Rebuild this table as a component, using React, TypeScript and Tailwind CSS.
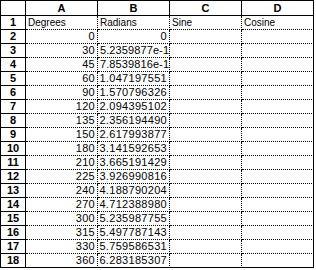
const COLUMNS = ["A", "B", "C", "D"];

const DATA: [string, string][] = [
  ["0", "0"],
  ["30", "5.2359877e-1"],
  ["45", "7.8539816e-1"],
  ["60", "1.047197551"],
  ["90", "1.570796326"],
  ["120", "2.094395102"],
  ["135", "2.356194490"],
  ["150", "2.617993877"],
  ["180", "3.141592653"],
  ["210", "3.665191429"],
  ["225", "3.926990816"],
  ["240", "4.188790204"],
  ["270", "4.712388980"],
  ["300", "5.235987755"],
  ["315", "5.497787143"],
  ["330", "5.759586531"],
  ["360", "6.283185307"],
];

const ROWS = [
  { cells: ["Degrees", "Radians", "Sine", "Cosine"], numeric: false },
  ...DATA.map(([a, b]) => ({ cells: [a, b, "", ""], numeric: true })),
];

const App = () => {
  return (
    <div className="h-[270px] w-[316px] bg-white">
      <div className="grid w-[314px] grid-cols-[25px_repeat(4,72px)] border-l border-t border-black font-['Geneva','Liberation_Sans',sans-serif] text-black">
        {/* Header row */}
        <div className="h-[15px] border-b border-r border-black" />
        {COLUMNS.map((col) => (
          <div
            key={col}
            className="flex h-[15px] items-center justify-center border-b border-r border-black text-[11px] font-bold leading-none"
          >
            {col}
          </div>
        ))}

        {/* Data rows */}
        {ROWS.map((row, i) => {
          const last = i === ROWS.length - 1;
          return [
            <div
              key={`h${i}`}
              className="flex h-[14px] items-center justify-center border-b border-r border-black text-[11px] font-bold leading-none"
            >
              {i + 1}
            </div>,
            ...row.cells.map((val, j) => {
              const isSci = val.includes("e-");
              const bottom = last ? "[border-bottom-style:solid]" : "[border-bottom-style:dotted]";
              const right = j === 3 ? "[border-right-style:solid]" : "[border-right-style:dotted]";
              const align =
                row.numeric && !isSci ? "justify-end pr-[2px]" : "justify-start pl-[2px]";
              const size = !row.numeric
                ? "text-[10px]"
                : isSci
                  ? "text-[11px] tracking-[0.1px]"
                  : "text-[11px] tracking-[0.3px]";
              return (
                <div
                  key={`c${i}-${j}`}
                  className={`flex h-[14px] items-center overflow-hidden whitespace-nowrap border-b border-r border-black leading-none ${bottom} ${right} ${align} ${size}`}
                >
                  {val}
                </div>
              );
            }),
          ];
        })}
      </div>
    </div>
  );
};

export default App;
